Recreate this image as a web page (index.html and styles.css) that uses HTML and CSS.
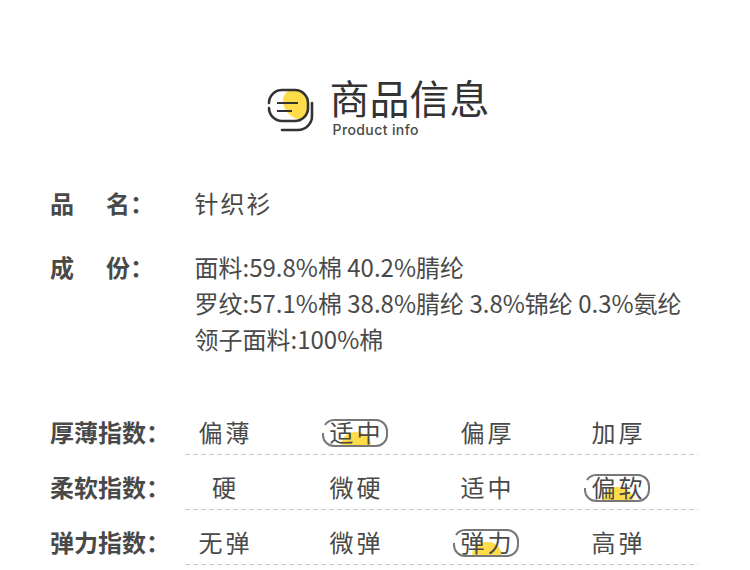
FILE: index.html
```html
<!DOCTYPE html>
<html lang="zh-CN">
<head>
<meta charset="utf-8">
<title>商品信息</title>
<link rel="stylesheet" href="styles.css">
</head>
<body>
<main class="page">
  <header class="head">
    <svg class="logo" width="50" height="48" viewBox="0 0 50 48" fill="none">
      <path d="M22 5C18 8 17 11 17 15C17 24 25 32 34 34L41 31V14C41 8 37 5 34 5Z" fill="#ffdd4a"/>
      <path d="M3 22A13 13 0 0 0 16 35H29A13 13 0 0 0 42 22V17A13 13 0 0 0 29 4H16A13 13 0 0 0 3 17" stroke="#333" stroke-width="2.6" stroke-linecap="round"/>
      <path d="M11 17H32M11 25H26" stroke="#333" stroke-width="2"/>
      <path d="M46 17V30A14 14 0 0 1 32 44H16" stroke="#333" stroke-width="2.6" stroke-linecap="round"/>
    </svg>
    <div class="titles">
      <h1 class="title">商品信息</h1>
      <p class="sub">Product info</p>
    </div>
  </header>

  <section class="info">
    <div class="info-row name-row">
      <div class="label"><span>品</span><span>名：</span></div>
      <div class="value spaced">针织衫</div>
    </div>
    <div class="info-row">
      <div class="label"><span>成</span><span>份：</span></div>
      <div class="value">面料:59.8%棉 40.2%腈纶<br>罗纹:57.1%棉 38.8%腈纶 3.8%锦纶 0.3%氨纶<br>领子面料:100%棉</div>
    </div>
  </section>

  <section class="scales">
    <div class="scale">
      <div class="scale-label">厚薄指数：</div>
      <ul class="options">
        <li class="option">偏薄</li>
        <li class="option on">
          <svg class="pill" width="66" height="28" viewBox="0 0 66 28" fill="none"><path d="M1 14V16A11 11 0 0 0 12 27H54A11 11 0 0 0 65 16V12A11 11 0 0 0 54 1H12A11 11 0 0 0 3 6"/></svg>适中
        </li>
        <li class="option">偏厚</li>
        <li class="option">加厚</li>
      </ul>
    </div>
    <div class="scale">
      <div class="scale-label">柔软指数：</div>
      <ul class="options">
        <li class="option">硬</li>
        <li class="option">微硬</li>
        <li class="option">适中</li>
        <li class="option on">
          <svg class="pill" width="66" height="28" viewBox="0 0 66 28" fill="none"><path d="M1 14V16A11 11 0 0 0 12 27H54A11 11 0 0 0 65 16V12A11 11 0 0 0 54 1H12A11 11 0 0 0 3 6"/></svg>偏软
        </li>
      </ul>
    </div>
    <div class="scale">
      <div class="scale-label">弹力指数：</div>
      <ul class="options">
        <li class="option">无弹</li>
        <li class="option">微弹</li>
        <li class="option on">
          <svg class="pill" width="66" height="28" viewBox="0 0 66 28" fill="none"><path d="M1 14V16A11 11 0 0 0 12 27H54A11 11 0 0 0 65 16V12A11 11 0 0 0 54 1H12A11 11 0 0 0 3 6"/></svg>弹力
        </li>
        <li class="option">高弹</li>
      </ul>
    </div>
  </section>
</main>
</body>
</html>
```
FILE: styles.css
```css
* { box-sizing: border-box; }
html, body { margin: 0; padding: 0; }
body {
  background: #fff;
  color: #494949;
  font-family: "Noto Sans CJK SC", "Noto Sans", sans-serif;
  overflow: hidden;
  position: relative;
  z-index: 0;
}
.page { width: 750px; height: 570px; padding-top: 75px; }

.head { display: flex; justify-content: center; align-items: flex-start; padding-left: 5px; height: 90px; }
.logo { margin-top: 11px; margin-right: 15px; flex: none; }
.titles { display: flex; flex-direction: column; }
.title { margin: 0 0 0 -1px; font-size: 40px; line-height: 44px; font-weight: 400; color: #333; }
.sub { margin: 2px 0 0 2px; font-family: "Inter", sans-serif; font-size: 14px; line-height: 18px; font-weight: 500; color: #494949; letter-spacing: 0.4px; }

.info { padding: 20px 0 0 50px; }
.info-row { display: flex; font-size: 24px; line-height: 36px; }
.name-row { margin-bottom: 28px; }
.label { width: 145px; flex: none; display: flex; gap: 32px; font-weight: 700; }
.value { flex: 1; margin-left: -0.5px; }
.spaced { letter-spacing: 2px; }

.scales { padding: 43px 0 0 50px; }
.scale { display: flex; height: 55px; font-size: 24px; }
.scale-label { width: 135px; flex: none; font-weight: 700; padding-top: 11px; line-height: 42px; white-space: nowrap; }
.options {
  list-style: none;
  margin: 0;
  padding: 0 41px 0 0;
  width: 513px;
  display: grid;
  grid-template-columns: repeat(4, 79px);
  column-gap: 52px;
  background: repeating-linear-gradient(90deg, #c8c8c8 0 5px, transparent 5px 8px) left bottom / 100% 1px no-repeat;
}
.option { position: relative; text-align: center; padding-top: 11px; line-height: 42px; letter-spacing: 3px; text-indent: 2px; }
.pill { position: absolute; left: 6px; top: 19px; stroke: #777; stroke-width: 2; }
.on::after {
  content: "";
  position: absolute;
  left: 25px;
  top: 32px;
  width: 30px;
  height: 14px;
  background: #ffdd4a;
  border-radius: 15px 15px 0 0;
  z-index: -1;
}
```
